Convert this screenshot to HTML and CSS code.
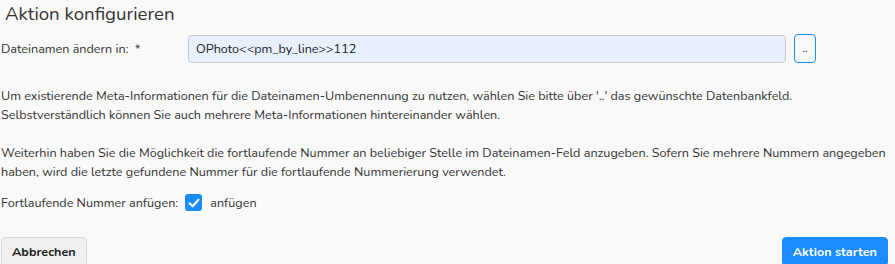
FILE: index.html
```html
<!DOCTYPE html>
<html lang="de">
<head>
  <meta charset="UTF-8" />
  <meta name="viewport" content="width=device-width, initial-scale=1.0" />
  <title>Aktion konfigurieren</title>
  <link rel="stylesheet" href="styles.css">
</head>
<body>
  <div class="dialog">
    <h2 class="title">Aktion konfigurieren</h2>

    <div class="field-row">
      <label for="filename">Dateinamen ändern in: <span class="req">*</span></label>
      <input id="filename" type="text" value="OPhoto&lt;&lt;pm_by_line&gt;&gt;112" />
      <button class="pick">..</button>
    </div>

    <p class="hint">Um existierende Meta-Informationen für die Dateinamen-Umbenennung zu nutzen, wählen Sie bitte über '..' das gewünschte Datenbankfeld. Selbstverständlich können Sie auch mehrere Meta-Informationen hintereinander wählen.</p>

    <p class="hint">Weiterhin haben Sie die Möglichkeit die fortlaufende Nummer an beliebiger Stelle im Dateinamen-Feld anzugeben. Sofern Sie mehrere Nummern angegeben haben, wird die letzte gefundene Nummer für die fortlaufende Nummerierung verwendet.</p>

    <div class="check-row">
      <span>Fortlaufende Nummer anfügen:</span>
      <label class="check">
        <span class="box">
          <svg width="12" height="10" viewBox="0 0 12 10"><path d="M1.5 5.2 L4.6 8.2 L10.5 1.8" fill="none" stroke="#fff" stroke-width="2" stroke-linecap="round" stroke-linejoin="round"/></svg>
        </span>
        anfügen
      </label>
    </div>

    <div class="footer">
      <button class="btn">Abbrechen</button>
      <button class="btn primary">Aktion starten</button>
    </div>
  </div>
</body>
</html>
```

FILE: styles.css
```css
* { box-sizing: border-box; }
body { margin: 0; background: #f9f9f9; color: #333; font-family: "Nunito", "Open Sans", "DejaVu Sans", sans-serif; font-size: 12.6px; line-height: 19px; overflow: hidden; }
.dialog { width: 893px; padding: 0 0 0 1px; }
.title { margin: 0; padding: 2px 0 0 4px; font-size: 18.7px; font-weight: 400; line-height: 24px; color: #333; }
.field-row { display: flex; align-items: center; margin-top: 8px; height: 29px; }
.field-row label { width: 187px; }
.req { margin-left: 3px; }
.field-row input { width: 598px; height: 28px; border: 1px solid #c8c8c8; border-radius: 4px; background: #e8f0fe; padding: 0 7px; font: inherit; color: #222; }
.pick { margin-left: 8px; width: 22px; height: 29px; border: 1px solid #1a8cff; border-radius: 4px; background: #f9f9f9; font: inherit; font-size: 11px; color: #333; padding: 0; }
.hint { margin: 23px 0 0; }
.hint + .hint { margin-top: 19px; }
.check-row { display: flex; align-items: center; margin-top: 12px; gap: 7px; }
.check { display: flex; align-items: center; gap: 8px; }
.box { width: 17px; height: 17px; border-radius: 3px; background: #1a8cff; display: flex; align-items: center; justify-content: center; }
.footer { display: flex; justify-content: space-between; margin-top: 25px; padding-right: 5px; }
.btn { height: 29px; padding: 0 10px; border: 1px solid #d6d6d6; border-radius: 4px; background: #f0f0f0; font: inherit; font-weight: 700; color: #222; }
.btn.primary { background: #1a8cff; border-color: #1a8cff; color: #fff; }
```
